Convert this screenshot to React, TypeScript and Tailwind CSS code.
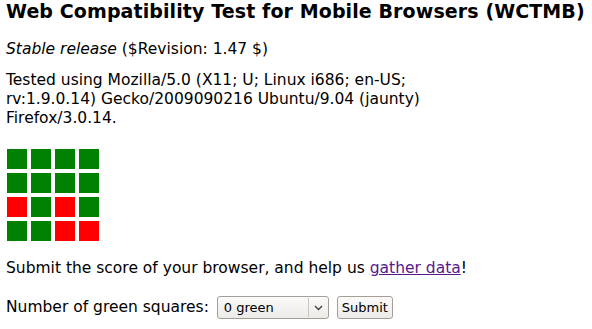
export default function App() {
  const rows = [
    ['g', 'g', 'g', 'g'],
    ['g', 'g', 'g', 'g'],
    ['r', 'g', 'r', 'g'],
    ['g', 'g', 'r', 'r'],
  ];
  return (
    <div className="min-h-screen bg-white px-[6px] text-[15.5px] leading-[19px] text-black" style={{ fontFamily: '"DejaVu Sans", sans-serif' }}>
      <h1 className="pt-[1px] text-[19px] font-bold leading-[21px] tracking-[0.1px]">Web Compatibility Test for Mobile Browsers (WCTMB)</h1>
      <p className="mt-[18px]">
        <em>Stable release</em> ($Revision: 1.47 $)
      </p>
      <p className="mt-[12px] w-[440px]">
        Tested using Mozilla/5.0 (X11; U; Linux i686; en-US; rv:1.9.0.14) Gecko/2009090216 Ubuntu/9.04 (jaunty) Firefox/3.0.14.
      </p>
      <div className="mt-[21px] ml-[1px] grid w-fit grid-cols-4 gap-[4px]">
        {rows.flat().map((c, i) => (
          <div key={i} className={`h-[20px] w-[20px] ${c === 'g' ? 'bg-[#008000]' : 'bg-[#ff0000]'}`} />
        ))}
      </div>
      <p className="mt-[18px]">
        Submit the score of your browser, and help us{' '}
        <a href="#" className="text-[#551a8b] underline">gather data</a>!
      </p>
      <div className="mt-[18px] flex items-center">
        <span className="mr-[8px]">Number of green squares:</span>
        <div className="flex h-[23px] w-[112px] items-center rounded-[3px] border border-[#a39e97] bg-gradient-to-b from-[#fbfaf9] to-[#ecebe8] text-[13px]">
          <span className="flex-1 pl-[6px]">0 green</span>
          <span className="flex h-[19px] w-[20px] items-center justify-center border-l border-[#c9c5bf]">
            <svg width="9" height="6" viewBox="0 0 9 6"><path d="M1 1l3.5 3.5L8 1" fill="none" stroke="#3c3c3c" strokeWidth="1.3" /></svg>
          </span>
        </div>
        <button className="ml-[8px] h-[23px] w-[56px] rounded-[3px] border border-[#a39e97] bg-gradient-to-b from-[#fbfaf9] to-[#ecebe8] text-[13px]">Submit</button>
      </div>
    </div>
  );
}
